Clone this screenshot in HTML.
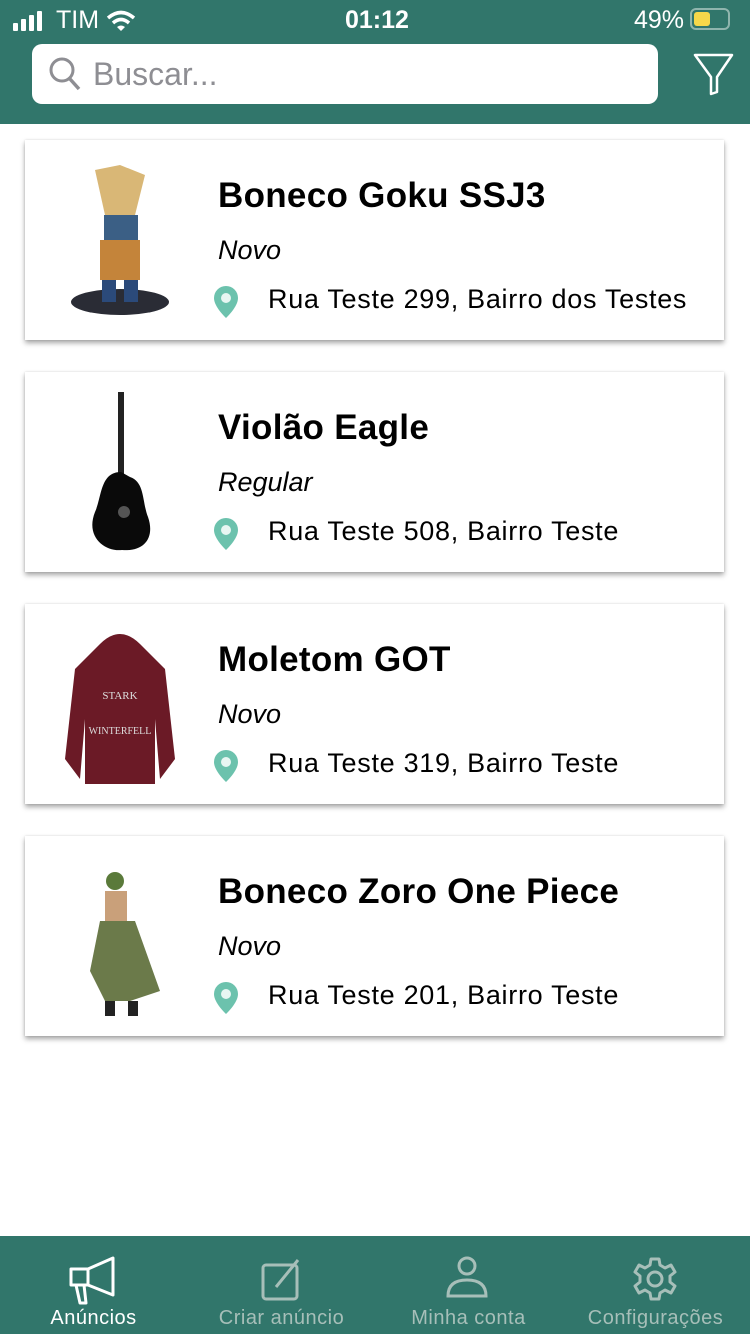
<!DOCTYPE html>
<html><head><meta charset="utf-8"><style>
*{margin:0;padding:0;box-sizing:border-box}
body{width:750px;height:1334px;position:relative;background:#fff;font-family:"Liberation Sans",sans-serif;overflow:hidden}
.hdr{position:absolute;left:0;top:0;width:750px;height:124px;background:#31766b}
.sb{position:absolute;top:6px;color:#fff;font-size:25px}
.search{position:absolute;left:32px;top:44px;width:626px;height:60px;background:#fff;border-radius:10px}
.search span{position:absolute;left:61px;top:12px;font-size:32px;color:#8e8e93}
.card{position:absolute;left:25px;width:699px;height:200px;background:#fff;box-shadow:0 3px 5px rgba(0,0,0,.35),0 0 2px rgba(0,0,0,.12)}
.t{position:absolute;left:193px;top:36px;font-size:35px;font-weight:bold;color:#000;letter-spacing:0.3px}
.c{position:absolute;left:193px;top:95px;font-size:27px;font-style:italic;color:#000}
.a{position:absolute;left:243px;top:144px;font-size:27px;color:#000;letter-spacing:0.7px}
.pin{position:absolute;left:188px;top:145px}
.img{position:absolute;left:35px;top:15px;width:120px;height:170px}
.nav{position:absolute;left:0;top:1236px;width:750px;height:98px;background:#31766b}
.nl{position:absolute;top:1307px;font-size:20px;color:#a7bfb9;text-align:center;width:187px;letter-spacing:0.5px}
</style></head><body>
<div class="hdr">
 <svg style="position:absolute;left:13px;top:11px" width="34" height="20"><rect x="0" y="12" width="5" height="8" rx="1" fill="#fff"/><rect x="8" y="8" width="5" height="12" rx="1" fill="#fff"/><rect x="16" y="4" width="5" height="16" rx="1" fill="#fff"/><rect x="24" y="0" width="5" height="20" rx="1" fill="#fff"/></svg>
 <div class="sb" style="left:56px">TIM</div>
 <svg style="position:absolute;left:106px;top:10px" width="30" height="22"><path d="M2 8 Q15 -3 28 8" stroke="#fff" stroke-width="3.5" fill="none"/><path d="M7 13 Q15 6 23 13" stroke="#fff" stroke-width="3.5" fill="none"/><path d="M11 17 L15 21 L19 17 Q15 14 11 17Z" fill="#fff"/></svg>
 <div class="sb" style="left:345px;font-weight:bold">01:12</div>
 <div class="sb" style="left:634px">49%</div>
 <div style="position:absolute;left:690px;top:8px;width:40px;height:22px;border:2px solid #8fb5ad;border-radius:6px"><div style="position:absolute;left:2px;top:2px;width:16px;height:14px;background:#f6d84a;border-radius:3px"></div></div>
 <div class="search"><svg style="position:absolute;left:16px;top:12px" width="34" height="36"><circle cx="14" cy="14" r="11" stroke="#8e8e93" stroke-width="3" fill="none"/><path d="M22 23 L31 33" stroke="#8e8e93" stroke-width="3.5"/></svg><span>Buscar...</span></div>
 <svg style="position:absolute;left:692px;top:52px" width="44" height="44"><path d="M3 3 H40 L25 25 V40 L19 42 V25 Z" stroke="#fff" stroke-width="2.5" fill="none" stroke-linejoin="round"/></svg>
</div>

<div class="card" style="top:140px">
 <svg class="img" viewBox="0 0 120 170"><ellipse cx="60" cy="147" rx="49" ry="13" fill="#2a2c35"/><path d="M35 15 L60 10 L85 20 L75 60 L45 60Z" fill="#d9b776"/><rect x="44" y="60" width="34" height="25" fill="#3b5f85"/><rect x="40" y="85" width="40" height="40" fill="#c4843a"/><rect x="42" y="125" width="14" height="22" fill="#2b4a7a"/><rect x="64" y="125" width="14" height="22" fill="#2b4a7a"/></svg>
 <div class="t">Boneco Goku SSJ3</div><div class="c">Novo</div>
 <svg class="pin" width="26" height="34" viewBox="0 0 26 34"><path d="M13 1 A12 12 0 0 1 25 13 C25 22 13 33 13 33 C13 33 1 22 1 13 A12 12 0 0 1 13 1Z" fill="#6cc2ad"/><circle cx="13" cy="13" r="5" fill="#e8f6f2"/></svg>
 <div class="a">Rua Teste 299, Bairro dos Testes</div>
</div>
<div class="card" style="top:372px">
 <svg class="img" viewBox="0 0 120 170"><rect x="58" y="5" width="6" height="90" fill="#222"/><path d="M61 85 C40 85 42 110 35 125 C25 150 45 165 62 163 C85 165 95 150 88 130 C82 115 85 95 70 90Z" fill="#0a0a0a"/><circle cx="64" cy="125" r="6" fill="#555"/></svg>
 <div class="t">Violão Eagle</div><div class="c">Regular</div>
 <svg class="pin" width="26" height="34" viewBox="0 0 26 34"><path d="M13 1 A12 12 0 0 1 25 13 C25 22 13 33 13 33 C13 33 1 22 1 13 A12 12 0 0 1 13 1Z" fill="#6cc2ad"/><circle cx="13" cy="13" r="5" fill="#e8f6f2"/></svg>
 <div class="a">Rua Teste 508, Bairro Teste</div>
</div>
<div class="card" style="top:604px">
 <svg class="img" viewBox="0 0 120 170"><path d="M40 25 Q60 5 80 25 L105 50 L115 140 L100 160 L95 100 L95 165 L25 165 L25 100 L20 160 L5 140 L15 50Z" fill="#6b1a26"/><text x="60" y="80" font-size="11" fill="#ddd" text-anchor="middle" font-family="Liberation Serif">STARK</text><text x="60" y="115" font-size="10" fill="#ddd" text-anchor="middle" font-family="Liberation Serif">WINTERFELL</text></svg>
 <div class="t">Moletom GOT</div><div class="c">Novo</div>
 <svg class="pin" width="26" height="34" viewBox="0 0 26 34"><path d="M13 1 A12 12 0 0 1 25 13 C25 22 13 33 13 33 C13 33 1 22 1 13 A12 12 0 0 1 13 1Z" fill="#6cc2ad"/><circle cx="13" cy="13" r="5" fill="#e8f6f2"/></svg>
 <div class="a">Rua Teste 319, Bairro Teste</div>
</div>
<div class="card" style="top:836px">
 <svg class="img" viewBox="0 0 120 170"><circle cx="55" cy="30" r="9" fill="#5a7a3a"/><rect x="45" y="40" width="22" height="30" fill="#c9a07a"/><path d="M40 70 L75 70 L100 140 L70 150 L45 150 L30 120Z" fill="#6b7a4a"/><rect x="45" y="150" width="10" height="15" fill="#222"/><rect x="68" y="150" width="10" height="15" fill="#222"/></svg>
 <div class="t">Boneco Zoro One Piece</div><div class="c">Novo</div>
 <svg class="pin" width="26" height="34" viewBox="0 0 26 34"><path d="M13 1 A12 12 0 0 1 25 13 C25 22 13 33 13 33 C13 33 1 22 1 13 A12 12 0 0 1 13 1Z" fill="#6cc2ad"/><circle cx="13" cy="13" r="5" fill="#e8f6f2"/></svg>
 <div class="a">Rua Teste 201, Bairro Teste</div>
</div>

<div class="nav"></div>
<svg style="position:absolute;left:66px;top:1255px" width="56" height="50"><path d="M5 14 H22 L47 3 V40 L22 30 H5 Z M10 30 L14 48 H20 L18 30" stroke="#fff" stroke-width="3" fill="none" stroke-linejoin="round"/><path d="M22 14 V30" stroke="#fff" stroke-width="3"/></svg>
<svg style="position:absolute;left:260px;top:1256px" width="46" height="46"><rect x="3" y="9" width="34" height="34" rx="3" stroke="#a7bfb9" stroke-width="3" fill="none"/><path d="M16 31 L38 4" stroke="#a7bfb9" stroke-width="3"/></svg>
<svg style="position:absolute;left:445px;top:1256px" width="44" height="42"><circle cx="22" cy="10" r="8" stroke="#a7bfb9" stroke-width="3" fill="none"/><path d="M3 40 Q3 24 22 24 Q41 24 41 40 Z" stroke="#a7bfb9" stroke-width="3" fill="none"/></svg>
<svg style="position:absolute;left:632px;top:1256px" width="46" height="46" viewBox="0 0 46 46"><circle cx="23" cy="23" r="7" stroke="#a7bfb9" stroke-width="3" fill="none"/><path d="M19 3 H27 L28 9 L33 12 L39 9 L43 16 L38 20 V26 L43 30 L39 37 L33 34 L28 37 L27 43 H19 L18 37 L13 34 L7 37 L3 30 L8 26 V20 L3 16 L7 9 L13 12 L18 9 Z" stroke="#a7bfb9" stroke-width="3" fill="none" stroke-linejoin="round"/></svg>
<div class="nl" style="left:0;color:#fff">Anúncios</div>
<div class="nl" style="left:188px">Criar anúncio</div>
<div class="nl" style="left:375px">Minha conta</div>
<div class="nl" style="left:562px">Configurações</div>
</body></html>
